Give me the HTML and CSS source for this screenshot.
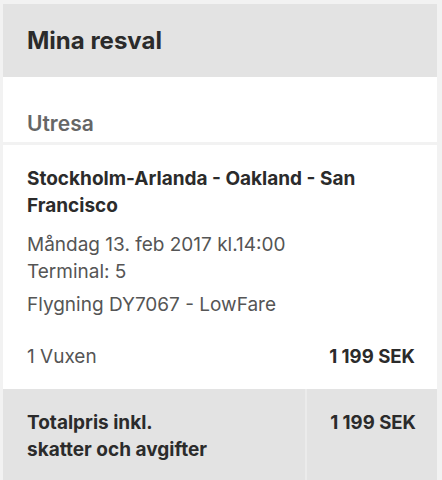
FILE: index.html
```html
<!DOCTYPE html>
<html lang="sv">
<head>
<meta charset="utf-8">
<title>Mina resval</title>
<link rel="stylesheet" href="styles.css">
</head>
<body>
<div class="panel">
  <div class="header"><h1 class="title">Mina resval</h1></div>
  <div class="leg-head"><h2 class="leg-title">Utresa</h2></div>
  <div class="card">
    <div class="route">Stockholm-Arlanda - Oakland - San Francisco</div>
    <div class="info">Måndag 13. feb 2017 kl.14:00<br>Terminal: 5</div>
    <div class="info flight">Flygning DY7067 - LowFare</div>
    <div class="row">
      <span class="pax">1 Vuxen</span>
      <span class="price">1 199 SEK</span>
    </div>
  </div>
  <div class="total">
    <div class="total-label">Totalpris inkl.<br>skatter och avgifter</div>
    <div class="total-price">1 199 SEK</div>
  </div>
</div>
</body>
</html>
```

FILE: styles.css
```css
html, body {
  margin: 0;
  padding: 0;
}
body {
  background: #f2f2f2;
  font-family: Inter, "Liberation Sans", sans-serif;
  padding: 4px 5px 0 3px;
  height: 480px;
  box-sizing: border-box;
  overflow: hidden;
}
.panel {
  display: flex;
  flex-direction: column;
}
.header {
  background: #e3e3e3;
  height: 73px;
  padding: 0 24px;
  box-sizing: border-box;
}
.title {
  margin: 0;
  padding-top: 22px;
  font-size: 24px;
  line-height: 30px;
  font-weight: 700;
  color: #2b2b2b;
}
.leg-head {
  background: #fff;
  height: 65px;
  padding: 0 24px;
  box-sizing: border-box;
}
.leg-title {
  margin: 0;
  padding-top: 33px;
  font-size: 21px;
  line-height: 28px;
  font-weight: 600;
  color: #666;
}
.card {
  background: #fff;
  margin-top: 3px;
  padding: 20px 22px 0 24px;
  height: 244px;
  box-sizing: border-box;
}
.route {
  font-size: 19px;
  font-weight: 700;
  line-height: 27px;
  color: #2b2b2b;
}
.info {
  margin-top: 12px;
  font-size: 19px;
  line-height: 27px;
  color: #555;
}
.flight {
  margin-top: 6px;
}
.row {
  display: flex;
  justify-content: space-between;
  margin-top: 25px;
  font-size: 19px;
  line-height: 27px;
}
.pax {
  color: #555;
}
.price {
  font-weight: 700;
  font-size: 18.6px;
  color: #2b2b2b;
}
.total {
  background: #e3e3e3;
  display: grid;
  grid-template-columns: 302px 2px 1fr;
  height: 100px;
}
.total::before {
  content: "";
  grid-column: 2;
  grid-row: 1;
  background: #ebebeb;
}
.total-label {
  grid-column: 1;
  grid-row: 1;
  padding: 20px 0 0 24px;
  font-size: 19px;
  line-height: 27px;
  font-weight: 700;
  color: #2b2b2b;
}
.total-price {
  grid-column: 3;
  grid-row: 1;
  padding: 20px 21px 0 0;
  text-align: right;
  font-size: 18.6px;
  line-height: 27px;
  font-weight: 700;
  color: #2b2b2b;
}
```
